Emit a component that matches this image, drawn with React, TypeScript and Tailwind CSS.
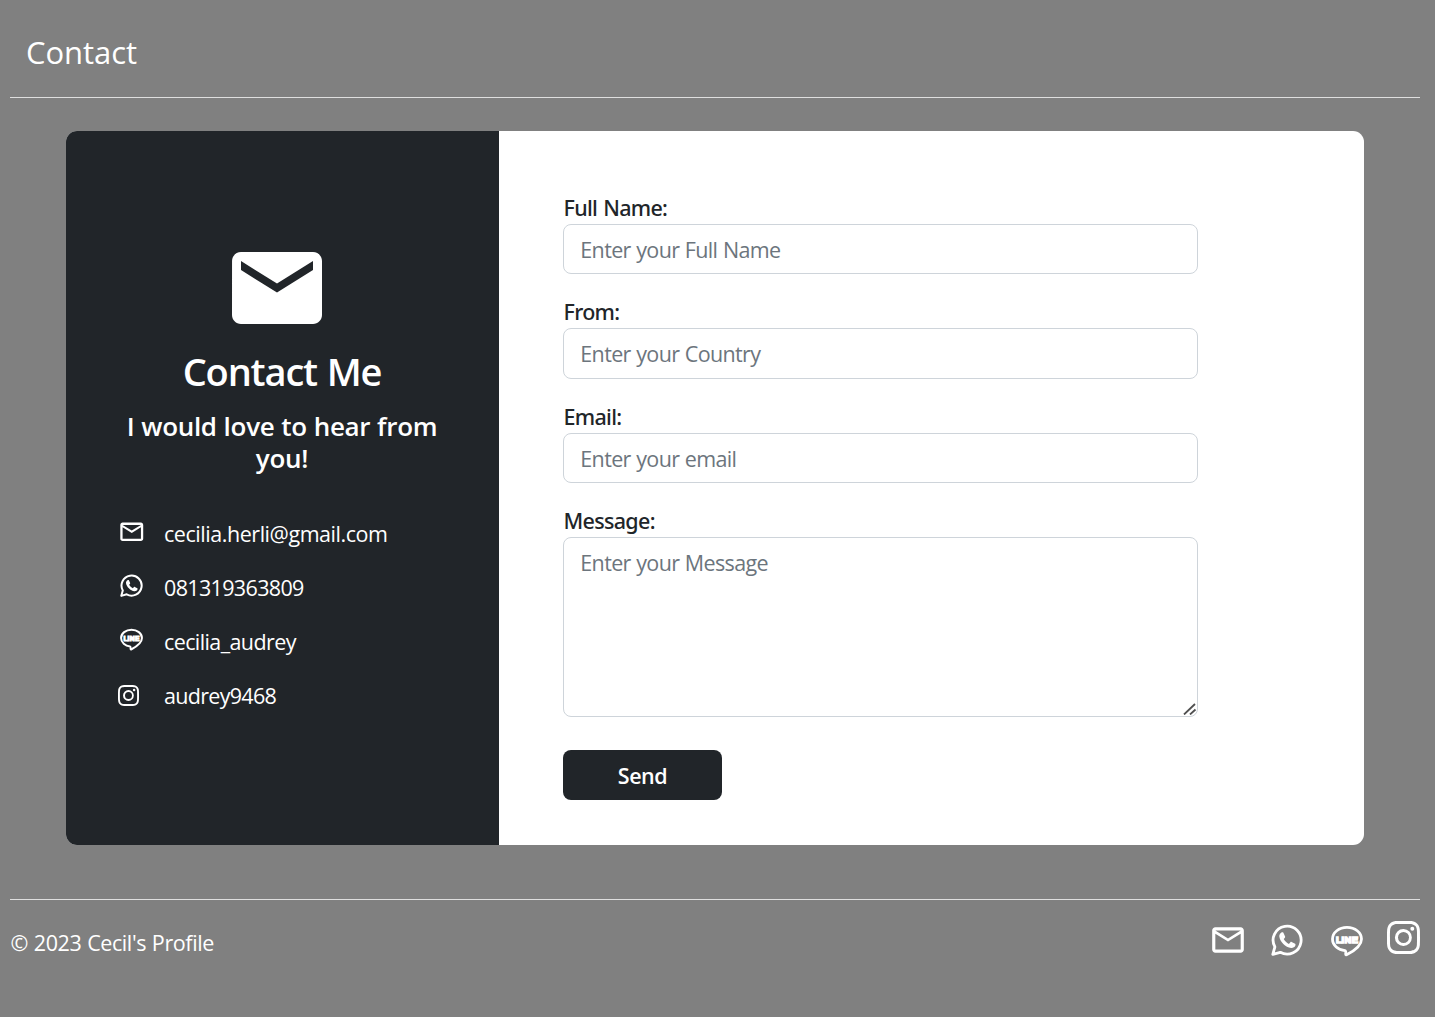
import { BsInstagram } from "react-icons/bs";
import { MdEmail, MdMailOutline } from "react-icons/md";

const control =
  "block w-full rounded-[8px] border border-[#ced4da] bg-white px-[16.3px] text-[21.5px] tracking-[-0.65px] [word-spacing:0.6px] text-[#212529] outline-none placeholder:text-[#6c757d] placeholder:opacity-100";
const label = "block h-[33px] pl-[0.5px] font-['Noto_Sans','Open_Sans',sans-serif] text-[21.5px] font-medium leading-[34.8px] tracking-[-0.68px] [word-spacing:1px]";

function WhatsappIcon({ className }: { className: string }) {
  return (
    <svg viewBox="0 0 32 32" className={className}>
      <path
        d="M1.8 30.4 3.9 22.9A14 14 0 1 1 9.3 28.3Z"
        fill="none"
        stroke="currentColor"
        strokeWidth="2.8"
        strokeLinejoin="round"
      />
      <path
        d="M10.4 8.6c.6-.5 1.6-.5 2 .1l1.7 3.8c.2.5 0 1-.4 1.4l-1 1.2c1.2 2.2 2.9 3.8 5.2 4.8l1.5-1.7c.3-.4.8-.4 1.2-.2l3.5 1.7c.5.3.5 1.2.2 2-.6 1.5-2.6 2.4-4.2 2.2C14.5 23.2 9 17.7 8.3 12.4c-.1-1.4.8-2.8 2.1-3.8z"
        fill="currentColor"
      />
    </svg>
  );
}

function LineIcon({ className }: { className: string }) {
  return (
    <svg viewBox="0 0 32 32" className={className}>
      <path
        d="M16 2.4C8 2.4 1.5 7.4 1.5 14c0 6.3 5.8 11 12.5 11.6 1 .2.9 1.3.7 3.2-.1 1 .5 1.2 1.3.8C21 27 30.5 21 30.5 14 30.5 7.4 24 2.4 16 2.4z"
        fill="none"
        stroke="currentColor"
        strokeWidth="2.8"
      />
      <text
        x="4.9 10.4 13.5 20.8"
        y="17.5"
        fill="currentColor"
        stroke="currentColor"
        strokeWidth="1.5"
        className="font-['Liberation_Sans',sans-serif] text-[9.5px] font-bold tracking-normal"
      >
        LINE
      </text>
    </svg>
  );
}

function Field({ id, text, hint }: { id: string; text: string; hint: string }) {
  return (
    <div className="mb-[21.3px]">
      <label htmlFor={id} className={label}>{text}</label>
      <input id={id} placeholder={hint} className={`h-[50.2px] pt-[1px] ${control}`} />
    </div>
  );
}

export default function App() {
  return (
    <div className="flex h-[1017px] w-[1435px] flex-col overflow-hidden bg-[#808080] pl-[10px] pr-[15px] font-['Open_Sans','Noto_Sans',sans-serif] text-white">
      <header className="h-[98px] border-b border-[#dfdfdf] pl-[16px] pt-[29px]">
        <h1 className="text-[31px] leading-[46px] tracking-[-0.05px]">Contact</h1>
      </header>

      <main className="mt-[33px] ml-[56px] flex h-[714px] w-[1298px] overflow-hidden rounded-[11px] bg-white text-[#212529]">
        <section className="w-[433px] shrink-0 bg-[#212529] pt-[103px] text-white">
          <MdEmail className="ml-[157px] size-[108px]" />
          <h2 className="mt-[4px] pr-[1px] text-center text-[38px] font-semibold leading-[50px] tracking-[-1.15px] [word-spacing:1px]">Contact Me</h2>
          <h3 className="mt-[14px] pr-[1px] text-center text-[26px] font-semibold leading-[32px] tracking-[-0.3px] [word-spacing:0.4px]">
            I would love to hear from
            <br />
            you!
          </h3>
          <ul className="mt-[33px] text-[21.5px] leading-[54px] tracking-[-0.6px]">
            <li className="flex h-[54px] pl-[51.5px]">
              <MdMailOutline className="mt-[11px] size-[27.5px]" />
              <span className="ml-[19px] tracking-[-0.45px]">cecilia.herli@gmail.com</span>
            </li>
            <li className="flex h-[54px] pl-[54px]">
              <WhatsappIcon className="mt-[13px] size-[23px]" />
              <span className="ml-[21px] tracking-[-0.65px]">081319363809</span>
            </li>
            <li className="flex h-[54px] pl-[54px]">
              <LineIcon className="mt-[13px] size-[23px]" />
              <span className="ml-[21px]">cecilia_audrey</span>
            </li>
            <li className="flex h-[54px] pl-[52px]">
              <BsInstagram className="mt-[16px] size-[21px]" />
              <span className="ml-[25px] tracking-[-0.7px]">audrey9468</span>
            </li>
          </ul>
        </section>

        <form className="ml-[64px] w-[635px] pt-[59.9px]" onSubmit={(e) => e.preventDefault()}>
          <Field id="name" text="Full Name:" hint="Enter your Full Name" />
          <Field id="country" text="From:" hint="Enter your Country" />
          <Field id="email" text="Email:" hint="Enter your email" />
          <label htmlFor="message" className={label}>Message:</label>
          <div className="relative">
            <textarea id="message" placeholder="Enter your Message" className={`h-[180px] resize-none py-[8px] leading-[34px] ${control}`} />
            <svg viewBox="0 0 14 12" className="absolute bottom-[2px] right-[1.5px] h-[12px] w-[14px]" fill="none" stroke="#505050" strokeWidth="1.8">
              <path d="M1 11.5 12 1M7 11.5 12.5 6.5" />
            </svg>
          </div>
          <button className="mt-[32.6px] block h-[50px] w-[159px] rounded-[8px] bg-[#212529] pt-[2px] text-[21.5px] font-semibold tracking-[-0.5px] text-white">
            Send
          </button>
        </form>
      </main>

      <footer className="mt-[54px] flex h-[90px] justify-between border-t border-[#dfdfdf]">
        <p className="mt-[26px] pl-[0.5px] text-[21.5px] leading-[34px] tracking-[-0.4px] [word-spacing:0.6px]">© 2023 Cecil's Profile</p>
        <div className="flex">
          <MdMailOutline className="mt-[21px] size-[38px]" />
          <WhatsappIcon className="ml-[24px] mt-[24px] size-[32px]" />
          <LineIcon className="ml-[28px] mt-[25px] size-[32px]" />
          <BsInstagram className="ml-[24px] mt-[21px] size-[33px]" />
        </div>
      </footer>
    </div>
  );
}
